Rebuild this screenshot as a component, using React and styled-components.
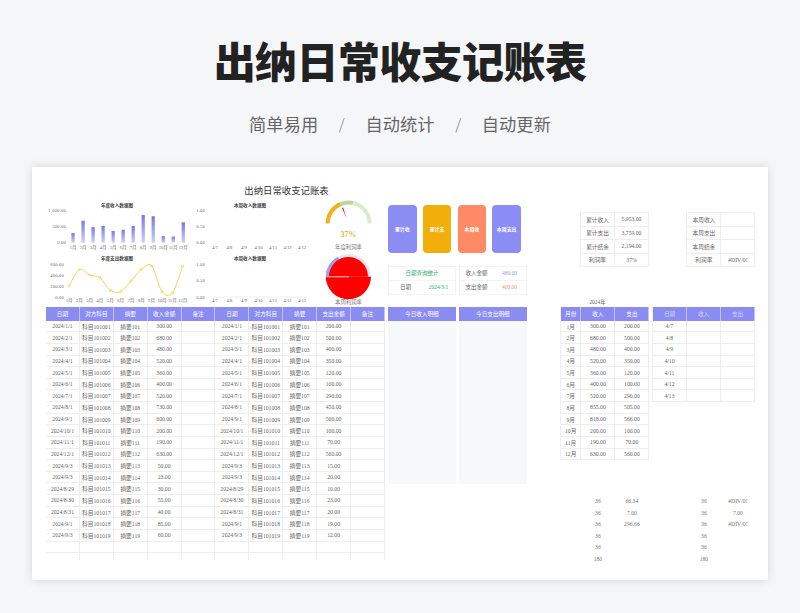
import React from 'react';
import styled, { createGlobalStyle } from 'styled-components';

const SERIF = `"Liberation Serif", "Noto Sans CJK SC", serif`;
const SANS = `"Noto Sans CJK SC", "Noto Sans", sans-serif`;
const ROW = 11.63;
const HEAD = 13.7;

const Global = createGlobalStyle`
  html, body { margin: 0; padding: 0; width: 800px; height: 613px; overflow: hidden; background: #f5f6f8; }
`;
const Page = styled.div`
  width: 800px; height: 613px; display: flex; flex-direction: column; align-items: center;
  background: #f5f6f8; font-family: ${SANS};
`;
const Title = styled.h1`
  margin: 30px 0 0; height: 60px; line-height: 60px; font-size: 42px; font-weight: 900;
  color: #222; letter-spacing: -0.6px;
`;
const Tagline = styled.div`
  margin-top: 21px; height: 26px; display: flex; gap: 20.6px; align-items: center;
  font-size: 17.2px; line-height: 26px; color: #666; letter-spacing: 0.1px;
`;
const Slash = styled.span`
  font-size: 15px; font-weight: 300; color: #777; width: 6px;
`;
const Sheet = styled.div`
  margin-top: 30px; width: 736px; height: 413px; background: #fff; flex: none;
  box-shadow: 0 0 9px rgba(0,0,0,.14); padding-left: 14px; box-sizing: border-box;
  font-family: ${SERIF}; color: #666; font-size: 5.7px;
`;
const Upper = styled.div`
  height: 140px; display: flex; gap: 33px;
`;
const Dashboard = styled.div`
  width: 481px; padding-top: 18px; box-sizing: border-box;
`;
const SheetTitle = styled.div`
  height: 14px; line-height: 12px; text-align: center; font-size: 9.4px; color: #333;
`;
const DashBody = styled.div`
  display: flex;
`;
const Charts = styled.div`
  width: 272px; display: grid; grid-template-columns: 144px 128px; grid-auto-rows: 52px;
`;
const ChartSvg = styled.svg`
  display: block;
  text { font-family: ${SERIF}; font-size: 4.5px; fill: #666; }
  text.ttl { font-family: ${SANS}; font-size: 4.6px; font-weight: 700; fill: #444; }
  text.tick { letter-spacing: 0.25px; }
`;
const Gauges = styled.div`
  width: 61px; display: flex; flex-direction: column; align-items: center;
`;
const GaugeSvg = styled.svg`
  display: block; flex: none;
`;
const GaugeValue = styled.div`
  height: 11px; line-height: 11px; margin-top: 4px; font-size: 8px; font-weight: 700; color: #e8b93a; text-align: center;
`;
const GaugeCaption = styled.div`
  height: 10px; line-height: 10px; margin-top: ${p => p.$top}px; font-size: 5.4px; color: #777; text-align: center;
`;
const Controls = styled.div`
  margin-left: 9px; width: 139px; padding-top: 6px;
`;
const Cards = styled.div`
  display: flex; gap: 6.3px; width: 133px;
`;
const Card = styled.div`
  width: 28.5px; height: 47.5px; border-radius: 4px; background: ${p => p.$bg};
  display: flex; align-items: center; justify-content: center;
  color: #fff; font-size: 4.9px; font-weight: 700; white-space: nowrap; font-family: ${SANS};
`;
const Queries = styled.div`
  margin-top: 13.5px; display: flex; gap: 3px;
`;
const Query = styled.div`
  width: 68px; display: grid; grid-template-columns: 1fr 1fr; grid-auto-rows: 13.5px;
  border: 0.5px solid #f3f3f3; box-sizing: border-box;
`;
const QCell = styled.div`
  display: flex; align-items: center; justify-content: center;
  font-size: 5.5px; color: ${p => p.$color || '#666'};
  grid-column: ${p => (p.$wide ? '1 / span 2' : 'auto')};
  border-bottom: ${p => (p.$line ? '0.5px solid #f3f3f3' : 'none')};
`;
const Summary = styled.div`
  padding-top: 45px; display: flex; flex-direction: column;
`;
const SummaryRow = styled.div`
  display: flex; gap: 37.4px; margin-left: 20px;
`;
const Grid = styled.div`
  display: grid; width: max-content;
  grid-template-columns: ${p => p.$cols};
  grid-template-rows: ${p => p.$rows || 'none'};
  grid-auto-rows: ${p => p.$auto || ROW}px;
  border-left: ${p => (p.$framed ? '0.6px solid #eee' : 'none')};
  border-top: ${p => (p.$top ? '0.6px solid #eee' : 'none')};
`;
const Cell = styled.div`
  display: flex; align-items: center; justify-content: center; white-space: nowrap;
  box-sizing: border-box; overflow: hidden; color: #666;
  border-right: 0.6px solid #eee; border-bottom: ${p => (p.$open ? 'none' : '0.6px solid #eee')};
`;
const HeadCell = styled.div`
  display: flex; align-items: center; justify-content: center; box-sizing: border-box;
  background: #8a8cf2; color: ${p => p.$faint ? '#d4d5fb' : '#fff'}; font-size: 5.6px;
  border-right: 0.6px solid #c2c3f8;
`;
const Plain = styled.div`
  display: flex; align-items: center; justify-content: center; white-space: nowrap; color: #777;
`;
const Year = styled.div`
  margin: 30px 0 0 21px; width: 33px; height: 10px; line-height: 10px; text-align: center; font-size: 5.4px; color: #666;
`;
const Lower = styled.div`
  display: flex; align-items: flex-start;
`;
const Panel = styled.div`
  width: 68px; margin-left: 3px; height: 177px; display: flex; flex-direction: column; background: #f7f8fa;
`;
const PanelHead = styled.div`
  height: ${HEAD}px; flex: none; background: #8a8cf2; color: #fff; font-size: 5.6px;
  display: flex; align-items: center; justify-content: center;
`;
const Side = styled.div`
  margin-left: 33px; display: flex; flex-direction: column;
`;
const SideTop = styled.div`
  display: flex; gap: 2.6px; align-items: flex-start;
`;
const Tally = styled.div`
  margin: 34.9px 0 0 21px; display: flex; gap: 38px;
`;

const income = [300,680,480,520,360,400,520,730,600,200,190,630,50,23,30,55,40,85,60];
const expense = [200,500,400,350,120,100,290,450,500,100,70,560,15,20,10,23,20,19,12];
const dates = [...Array.from({length:12},(_, i)=>`2024/${i+1}/1`),'2024/9/3','2024/9/3','2024/8/29','2024/8/30','2024/8/31','2024/9/1','2024/9/3'];
const mIn = [300,680,480,520,360,400,520,855,818,200,190,630];
const mOut = [200,500,400,350,120,100,290,505,566,100,70,560];
const months = mIn.map((_, i)=>`${i+1}月`);
const week = ['4/7','4/8','4/9','4/10','4/11','4/12','4/13'];
const fmt = n => n.toFixed(2);

function smooth(pts) {
  let d = `M${pts[0][0]} ${pts[0][1]}`;
  for (let i = 0; i < pts.length - 1; i++) {
    const p0 = pts[i-1] || pts[i], p1 = pts[i], p2 = pts[i+1], p3 = pts[i+2] || p2;
    const c1 = [p1[0]+(p2[0]-p0[0])/6, p1[1]+(p2[1]-p0[1])/6];
    const c2 = [p2[0]-(p3[0]-p1[0])/6, p2[1]-(p3[1]-p1[1])/6];
    d += `C${c1[0]} ${c1[1]} ${c2[0]} ${c2[1]} ${p2[0]} ${p2[1]}`;
  }
  return d;
}

function BarChart() {
  const y0 = 43.7, k = 32.4 / 1000;
  return (
    <ChartSvg width="144" height="52" viewBox="0 0 144 52">
      <defs><linearGradient id="bar" x1="0" y1="0" x2="0" y2="1"><stop offset="0" stopColor="#7678e6"/><stop offset="1" stopColor="#cfd0f8"/></linearGradient></defs>
      <text className="ttl" x="71" y="7.6" textAnchor="middle">年度收入数据图</text>
      {[['1,000.00',11.3],['500.00',27.7],['0.00',43.7]].map(([t,y])=><text key={t} className="tick" x="20" y={y+1.5} textAnchor="end">{t}</text>)}
      {mIn.map((v,i)=><rect key={i} x={25.4+i*10.02} y={y0-v*k} width="3.3" height={v*k} fill="url(#bar)"/>)}
      {months.map((m,i)=><text key={m} x={27+i*10.02} y="50" textAnchor="middle">{m}</text>)}
    </ChartSvg>
  );
}
function LineChart() {
  const y0 = 46, k = 33 / 600;
  const pts = mOut.map((v,i)=>[23+i*10.33, y0-v*k]);
  return (
    <ChartSvg width="144" height="52" viewBox="0 0 144 52">
      <text className="ttl" x="71" y="8.6" textAnchor="middle">年度支出数据图</text>
      {[['600.00',13],['400.00',24],['200.00',35],['0.00',46]].map(([t,y])=><text key={t} className="tick" x="18" y={y+1.5} textAnchor="end">{t}</text>)}
      <path d={smooth(pts)} fill="none" stroke="#ebd75e" strokeWidth="1"/>
      {pts.map(([x,y],i)=><circle key={i} cx={x} cy={y} r="1.2" fill="#f6ea9a" stroke="#ebd75e" strokeWidth="0.5"/>)}
      {months.map((m,i)=><text key={m} x={23+i*10.33} y="51" textAnchor="middle">{m}</text>)}
    </ChartSvg>
  );
}
function WeekChart({ top, base, line }) {
  const ys = line ? [13,29,46] : [11.3,27.7,43.7];
  return (
    <ChartSvg width="128" height="52" viewBox="0 0 128 52">
      <text className="ttl" x="60" y={top} textAnchor="middle">本周收入数据图</text>
      {['1.00','0.50','0.00'].map((t,i)=><text key={t} className="tick" x="15" y={ys[i]+1.5} textAnchor="end">{t}</text>)}
      {line && <line x1="23" x2="115" y1="46" y2="46" stroke="#e4e4e4" strokeWidth="0.6"/>}
      {week.map((w,i)=><text key={w} x={25+i*14.5} y={base} textAnchor="middle">{w}</text>)}
    </ChartSvg>
  );
}
const polar = (cx,cy,r,deg) => [cx + r*Math.cos(deg*Math.PI/180), cy - r*Math.sin(deg*Math.PI/180)];
const arc = (cx,cy,r,a,b) => { const [x1,y1]=polar(cx,cy,r,a), [x2,y2]=polar(cx,cy,r,b); return `M${x1} ${y1}A${r} ${r} 0 ${a-b>180?1:0} 1 ${x2} ${y2}`; };
function YearGauge() {
  return (
    <GaugeSvg width="61" height="26" viewBox="0 0 61 26">
      <path d={arc(30.6,24.5,21,180,113)} fill="none" stroke="#f0b11e" strokeWidth="4"/>
      <path d={arc(30.6,24.5,21,113,78)} fill="none" stroke="#b5d99c" strokeWidth="4"/>
      <path d={arc(30.6,24.5,21,78,0)} fill="none" stroke="#d8ebca" strokeWidth="4"/>
      <polygon points="24,9 25.2,8.6 28.6,19.4" fill="#c8323c"/>
    </GaugeSvg>
  );
}
function WeekGauge() {
  const c = 30.4, y = 24.7;
  return (
    <GaugeSvg width="61" height="47" viewBox="0 0 61 47">
      <path d={arc(c,y,21,180,0)} fill="none" stroke="#e4e4f4" strokeWidth="3.2"/>
      <path d={arc(c,y,21,180,118)} fill="none" stroke="#9a9cee" strokeWidth="3.2"/>
      <path d={`M${c-19.6} ${y}A19.6 19.6 0 0 1 ${c+19.6} ${y}Z`} fill="#fe0000"/>
      <path d={`M${c-22.6} ${y}A22.6 22.6 0 0 0 ${c+22.6} ${y}Z`} fill="#fe0000"/>
      <line x1={c-22} x2={c+0.6} y1={y} y2={y} stroke="#f2a3a8" strokeWidth="1.3"/>
    </GaugeSvg>
  );
}
const LEDGER_HEAD = ['日期','对方科目','摘要','收入金额','备注','日期','对方科目','摘要','支出金额','备注'];
function Ledger() {
  const rowsTpl = `${HEAD}px repeat(20, ${ROW}px) 7px`;
  return (
    <Grid $cols="repeat(10, 33.9px)" $rows={rowsTpl}>
      {LEDGER_HEAD.map((h,i)=><HeadCell key={i}>{h}</HeadCell>)}
      {dates.map((d,i)=>{
        const id = `科目${101001+i}`, s = `摘要${101+i}`;
        return (
          <React.Fragment key={i}>
            <Cell>{d}</Cell><Cell>{id}</Cell><Cell>{s}</Cell><Cell>{fmt(income[i])}</Cell><Cell/>
            <Cell>{d}</Cell><Cell>{id}</Cell><Cell>{s}</Cell><Cell>{fmt(expense[i])}</Cell><Cell/>
          </React.Fragment>
        );
      })}
      {Array.from({length:10},(_, i)=><Cell key={`e${i}`}/>)}
      {Array.from({length:10},(_, i)=><Cell key={`f${i}`} $open/>)}
    </Grid>
  );
}
const summary1 = [['累计收入','5,953.00'],['累计支出','3,759.00'],['累计结余','2,194.00'],['利润率','37%']];
const summary2 = [['本周收入',''],['本周支出',''],['本周结余',''],['利润率','#DIV/0!']];
const SummaryTable = ({rows}) => (
  <Grid $cols="34px 34px" $auto={13.5} $framed $top>
    {rows.map(([a,b])=><React.Fragment key={a}><Cell>{a}</Cell><Cell>{b}</Cell></React.Fragment>)}
  </Grid>
);
const TallyTable = ({rows}) => (
  <Grid $cols="34px 34px">
    {rows.map(([a,b],i)=><React.Fragment key={i}><Plain>{a}</Plain><Plain>{b}</Plain></React.Fragment>)}
  </Grid>
);

export default function App() {
  return (
    <Page>
      <Global/>
      <Title>出纳日常收支记账表</Title>
      <Tagline>
        <span>简单易用</span><Slash>/</Slash><span>自动统计</span><Slash>/</Slash><span>自动更新</span>
      </Tagline>
      <Sheet>
        <Upper>
          <Dashboard>
            <SheetTitle>出纳日常收支记账表</SheetTitle>
            <DashBody>
              <Charts>
                <BarChart/>
                <WeekChart top={7.6} base={50}/>
                <LineChart/>
                <WeekChart top={8.6} base={51} line/>
              </Charts>
              <Gauges>
                <YearGauge/>
                <GaugeValue>37%</GaugeValue>
                <GaugeCaption $top={2}>年度利润率</GaugeCaption>
                <WeekGauge/>
                <GaugeCaption $top={-2}>本周利润率</GaugeCaption>
              </Gauges>
              <Controls>
                <Cards>
                  <Card $bg="#8b8df5">累计收</Card>
                  <Card $bg="#f2ae0b">累计支</Card>
                  <Card $bg="#ff8a66">本周收</Card>
                  <Card $bg="#8b8df5">本周支出</Card>
                </Cards>
                <Queries>
                  <Query>
                    <QCell $wide $line $color="#2fae70">日期查询统计</QCell>
                    <QCell>日期</QCell><QCell $color="#2fae70">2024/3/1</QCell>
                  </Query>
                  <Query>
                    <QCell $line>收入金额</QCell><QCell $line $color="#9a9cf0">480.00</QCell>
                    <QCell>支出金额</QCell><QCell $color="#f2917a">400.00</QCell>
                  </Query>
                </Queries>
              </Controls>
            </DashBody>
          </Dashboard>
          <Summary>
            <SummaryRow>
              <SummaryTable rows={summary1}/>
              <SummaryTable rows={summary2}/>
            </SummaryRow>
            <Year>2024年</Year>
          </Summary>
        </Upper>
        <Lower>
          <Ledger/>
          <Panel><PanelHead>今日收入明细</PanelHead></Panel>
          <Panel><PanelHead>今日支出明细</PanelHead></Panel>
          <Side>
            <SideTop>
              <Grid $cols="20.5px 34px 34px" $rows={`${HEAD}px repeat(12, ${ROW}px)`} $framed>
                {['月份','收入','支出'].map(h=><HeadCell key={h}>{h}</HeadCell>)}
                {months.map((m,i)=><React.Fragment key={m}><Cell>{m}</Cell><Cell>{fmt(mIn[i])}</Cell><Cell>{fmt(mOut[i])}</Cell></React.Fragment>)}
              </Grid>
              <Grid $cols="repeat(3, 34px)" $rows={`${HEAD}px repeat(7, ${ROW}px)`} $framed>
                {['日期','收入','支出'].map(h=><HeadCell key={h} $faint>{h}</HeadCell>)}
                {week.map(w=><React.Fragment key={w}><Cell>{w}</Cell><Cell/><Cell/></React.Fragment>)}
              </Grid>
            </SideTop>
            <Tally>
              <TallyTable rows={[['36','66.34'],['36','7.00'],['36','296.66'],['36',''],['36',''],['180','']]}/>
              <TallyTable rows={[['36','#DIV/0!'],['36','7.00'],['36','#DIV/0!'],['36',''],['36',''],['180','']]}/>
            </Tally>
          </Side>
        </Lower>
      </Sheet>
    </Page>
  );
}
